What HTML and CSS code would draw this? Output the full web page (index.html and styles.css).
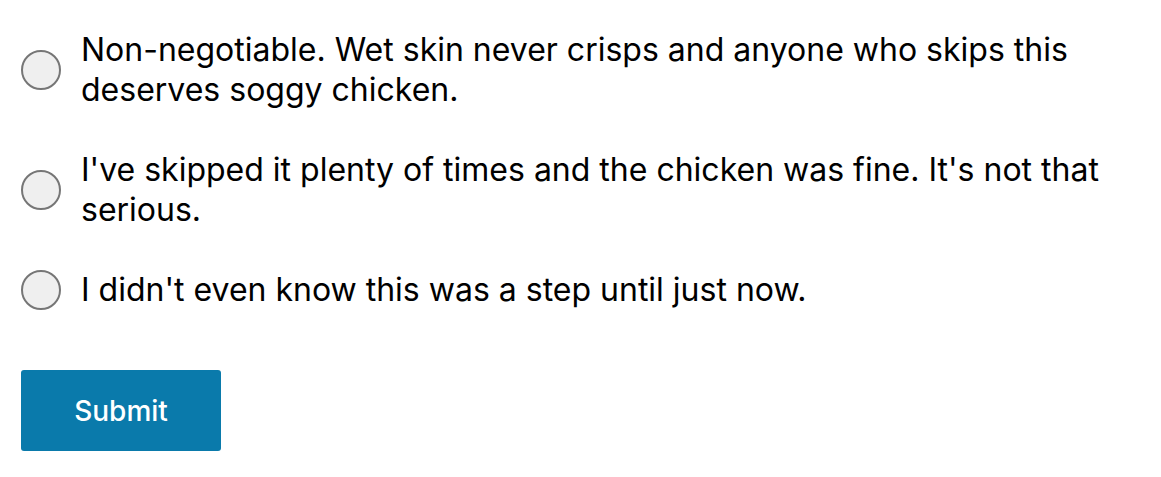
FILE: index.html
```html
<!DOCTYPE html>
<html lang="en">
<head>
<meta charset="utf-8">
<title>Poll</title>
<link rel="stylesheet" href="styles.css">
</head>
<body>
<form class="poll">
  <div class="options">
    <label class="option">
      <input type="radio" name="answer" class="radio">
      <span class="label-text">Non-negotiable. Wet skin never crisps and anyone who skips this deserves soggy chicken.</span>
    </label>
    <label class="option">
      <input type="radio" name="answer" class="radio">
      <span class="label-text">I've skipped it plenty of times and the chicken was fine. It's not that serious.</span>
    </label>
    <label class="option">
      <input type="radio" name="answer" class="radio">
      <span class="label-text">I didn't even know this was a step until just now.</span>
    </label>
  </div>
  <button type="button" class="submit">Submit</button>
</form>
</body>
</html>
```

FILE: styles.css
```css
html, body {
  margin: 0;
  padding: 0;
  background: #ffffff;
}

body {
  font-family: Inter, "Noto Sans", sans-serif;
  color: #000000;
}

.poll {
  padding: 30px 21px;
  display: flex;
  flex-direction: column;
  align-items: flex-start;
}

.options {
  display: flex;
  flex-direction: column;
  gap: 40px;
  width: 1119px;
}

.option {
  display: flex;
  align-items: center;
  gap: 20px;
  cursor: pointer;
}

.radio {
  appearance: none;
  -webkit-appearance: none;
  margin: 0;
  flex: 0 0 auto;
  width: 40px;
  height: 40px;
  border-radius: 50%;
  border: 2px solid #767676;
  background: #efefef;
  box-sizing: border-box;
}

.label-text {
  font-size: 32px;
  line-height: 40px;
}

.submit {
  margin-top: 60px;
  width: 200px;
  height: 81px;
  border: none;
  border-radius: 3px;
  background: #0a7aab;
  color: #ffffff;
  font-family: Inter, "Noto Sans", sans-serif;
  font-size: 28px;
  font-weight: 500;
  cursor: pointer;
}
```
